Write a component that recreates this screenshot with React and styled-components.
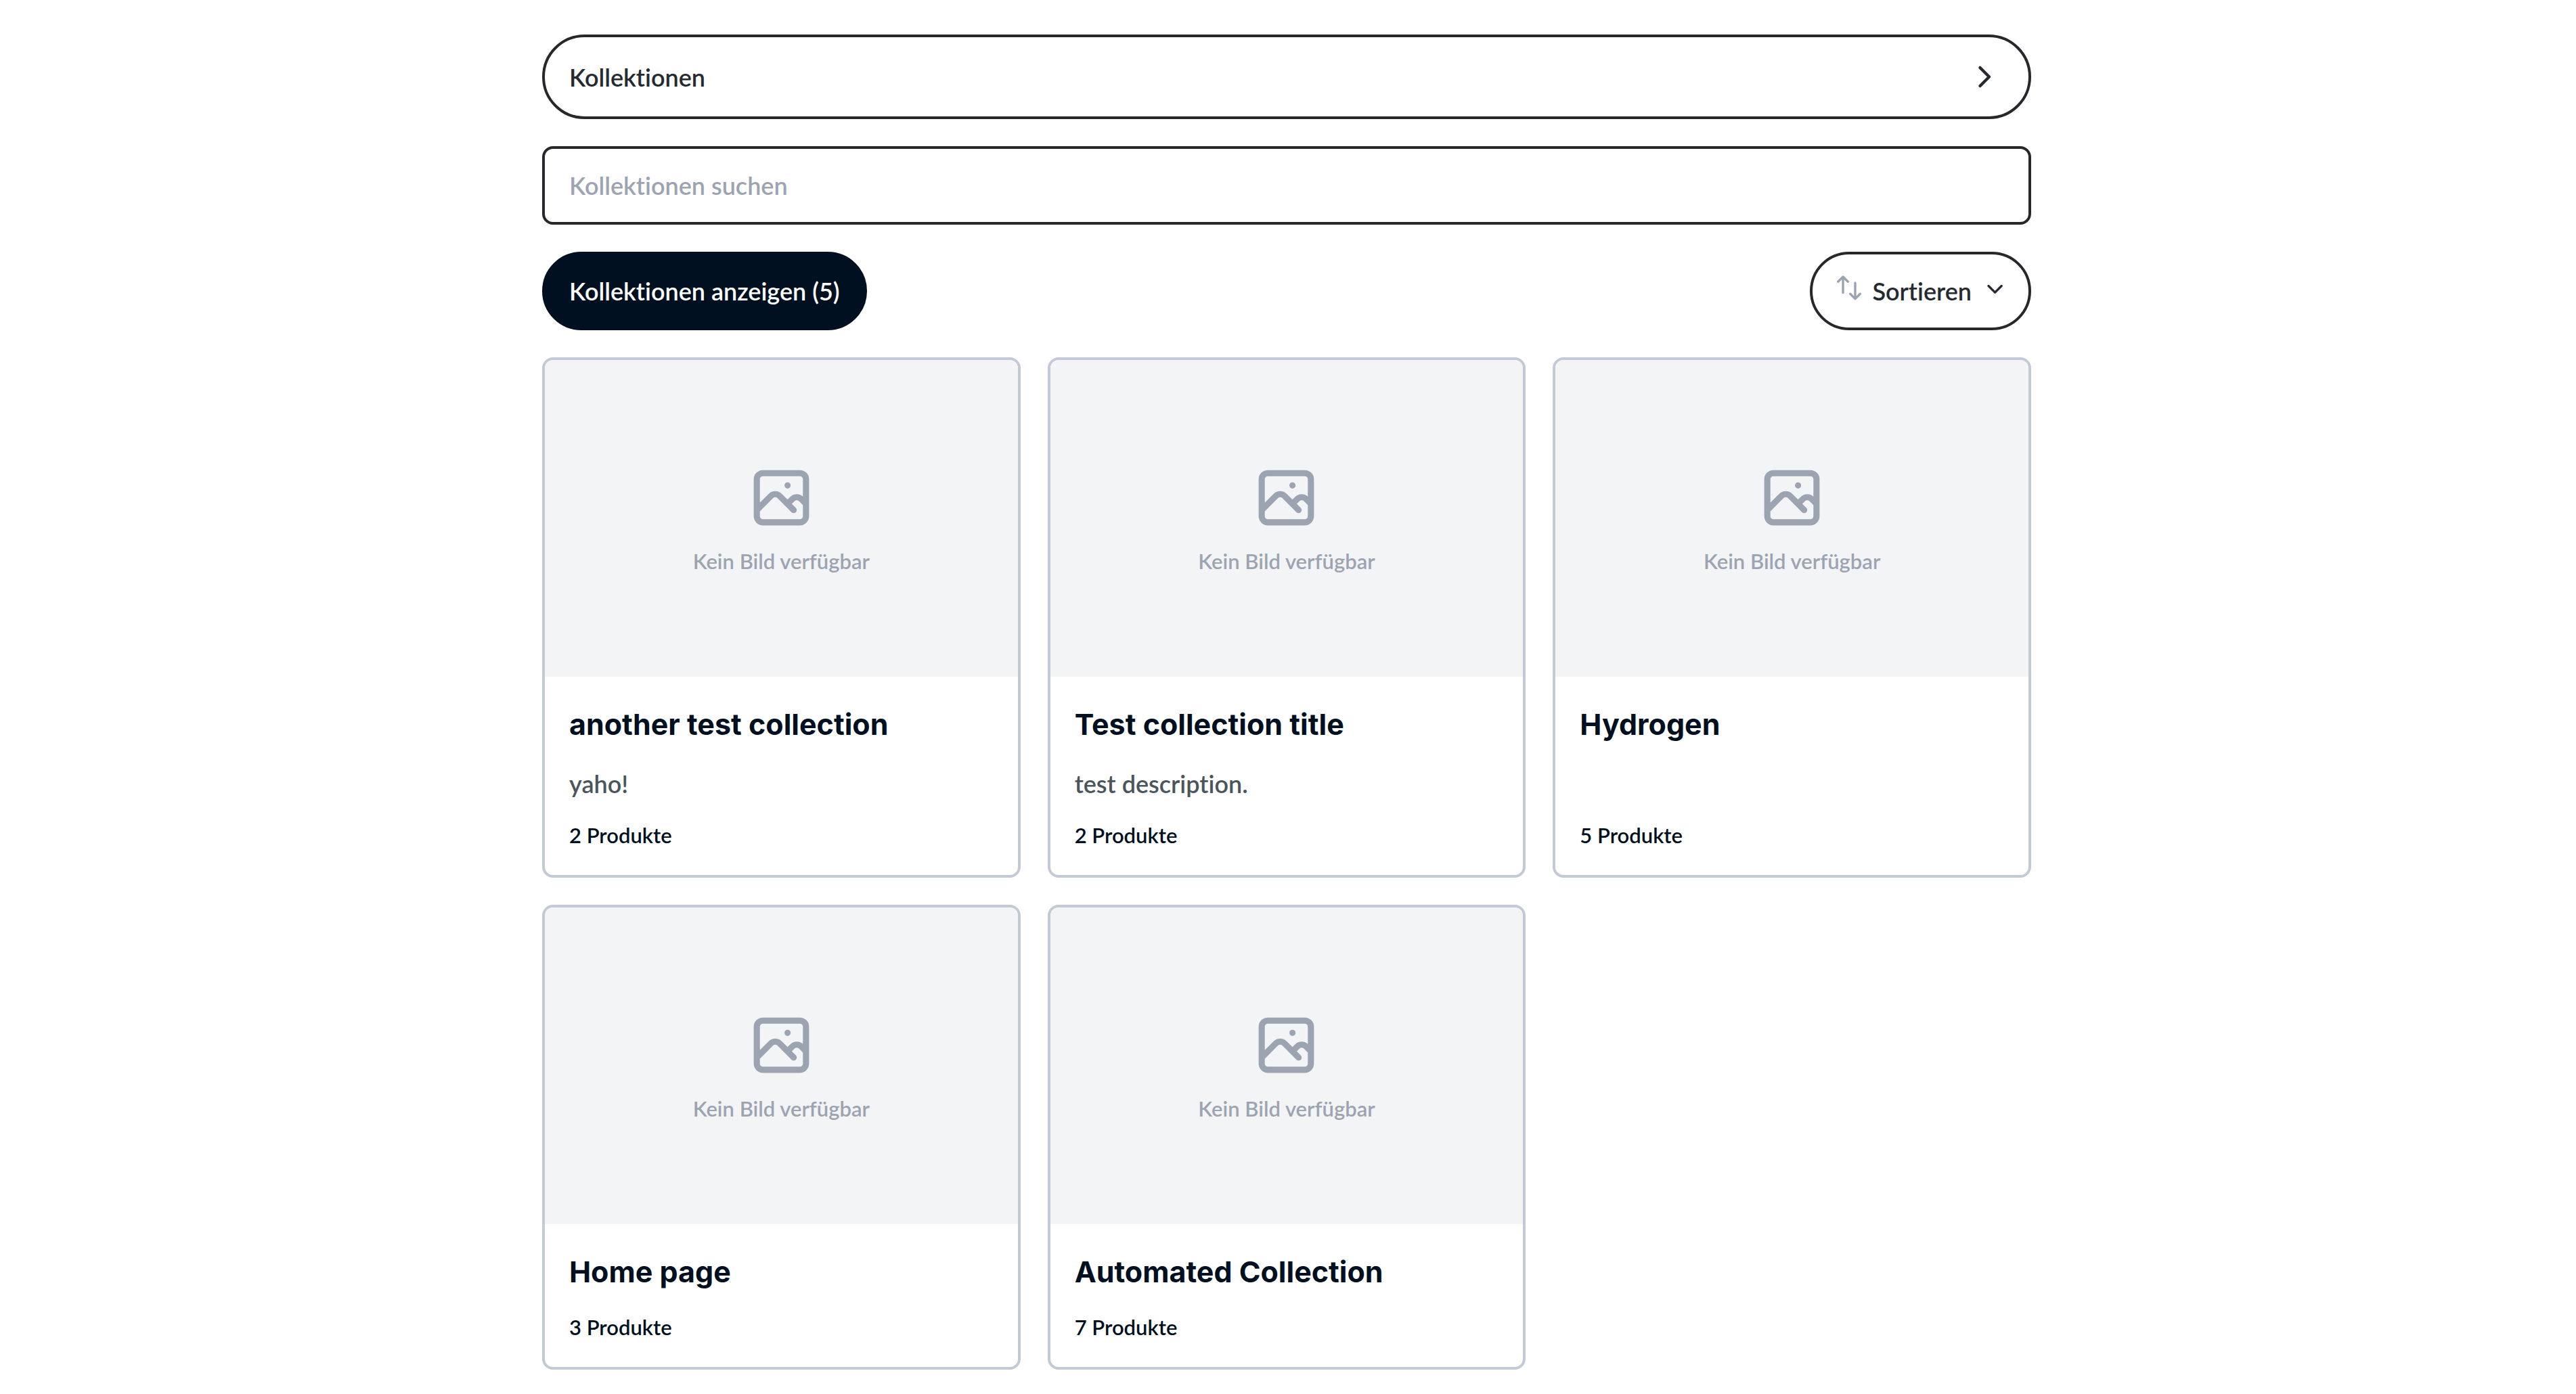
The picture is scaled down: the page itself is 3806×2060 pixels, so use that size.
import React, { useState } from 'react';
import styled, { createGlobalStyle, css } from 'styled-components';

const colors = {
  ink: '#001020',
  text: '#252b30',
  line: '#26282c',
  muted: '#4b555c',
  placeholder: '#9ca4b2',
  cardLine: '#c2cad6',
  imageBg: '#f2f4f6',
};

const GlobalStyle = createGlobalStyle`
  *, *::before, *::after {
    box-sizing: border-box;
  }

  body {
    margin: 0;
    background: #fff;
    color: ${colors.ink};
    font-family: Lato, 'Liberation Sans', sans-serif;
    font-size: 36px;
    font-weight: 600;
    line-height: 52px;
    font-variant-ligatures: none;
  }

  button, input {
    font: inherit;
    font-variant-ligatures: none;
  }
`;

const Page = styled.main`
  display: flex;
  flex-direction: column;
  gap: 40px;
  width: 100%;
  max-width: 2276px;
  margin: 0 auto;
  padding: 51px 40px 36px 36px;
`;

const BreadcrumbLink = styled.a`
  display: flex;
  align-items: center;
  justify-content: space-between;
  padding: 31px 36px;
  border: 4px solid ${colors.line};
  border-radius: 64px;
  color: ${colors.text};
  text-decoration: none;
`;

const SearchInput = styled.input`
  width: 100%;
  height: 116px;
  padding: 28px 36px;
  border: 4px solid ${colors.line};
  border-radius: 16px;
  background: #fff;
  color: ${colors.text};

  &::placeholder {
    color: ${colors.placeholder};
    opacity: 1;
  }
`;

const Toolbar = styled.div`
  display: flex;
  align-items: center;
  justify-content: space-between;
`;

const PillButton = styled.button`
  display: flex;
  align-items: center;
  padding: 28px 36px;
  border: 4px solid ${colors.line};
  border-radius: 58px;
  background: #fff;
  color: ${colors.text};
  cursor: pointer;

  ${(props) =>
    props.$primary &&
    css`
      border-color: ${colors.ink};
      background: ${colors.ink};
      color: #fff;
    `}
`;

const SortLabel = styled.span`
  margin: 0 22px 0 16px;
`;

const CardGrid = styled.div`
  display: grid;
  grid-template-columns: repeat(3, minmax(0, 1fr));
  gap: 40px;
`;

const Card = styled.a`
  display: flex;
  flex-direction: column;
  overflow: hidden;
  border: 4px solid ${colors.cardLine};
  border-radius: 16px;
  color: ${colors.ink};
  text-decoration: none;
`;

const CardImage = styled.div`
  display: flex;
  flex-direction: column;
  align-items: center;
  justify-content: center;
  gap: 16px;
  height: 468px;
  background: ${colors.imageBg};
  color: ${colors.placeholder};
  font-size: 31px;
  line-height: 46px;
`;

const CardBody = styled.div`
  display: flex;
  flex: 1;
  flex-direction: column;
  gap: 24px;
  padding: 36px;
`;

const CardTitle = styled.h2`
  margin: 0;
  font-family: Inter, 'Liberation Sans', sans-serif;
  font-size: 43px;
  font-weight: 700;
  line-height: 69px;
`;

const CardDescription = styled.p`
  margin: 0;
  color: ${colors.muted};
  line-height: 58px;
`;

const CardCount = styled.span`
  margin-top: auto;
  font-size: 31px;
  line-height: 46px;
`;

const StrokeIcon = styled.svg`
  flex: none;
  fill: none;
  stroke: currentColor;
  stroke-linecap: round;
  stroke-linejoin: round;
`;

const SortSvg = styled(StrokeIcon)`
  color: ${colors.placeholder};
`;

const ChevronRightIcon = () => (
  <StrokeIcon width="55" height="55" viewBox="0 0 55 55" strokeWidth="4.5" aria-hidden="true">
    <path d="M19.5 14l13.5 13.5L19.5 41" />
  </StrokeIcon>
);

const ChevronDownIcon = () => (
  <StrokeIcon width="26" height="32" viewBox="0 0 26 32" strokeWidth="3.4" aria-hidden="true">
    <path d="M3 8.5l9.6 9.6 9.6-9.6" />
  </StrokeIcon>
);

const SortIcon = () => (
  <SortSvg width="36" height="46" viewBox="0 0 36 46" strokeWidth="3.4" aria-hidden="true">
    <path d="M1.7 9.3L9 2l7.3 7.3M9 2v23.5" />
    <path d="M19.7 27.3l7.3 7.3 7.3-7.3M27 34.6V11" />
  </SortSvg>
);

const PhotoIcon = () => (
  <StrokeIcon width="109" height="109" viewBox="0 0 24 24" strokeWidth="2" aria-hidden="true">
    <path d="M4 16l4.586-4.586a2 2 0 012.828 0L16 16m-2-2l1.586-1.586a2 2 0 012.828 0L20 14m-6-6h.01M6 20h12a2 2 0 002-2V6a2 2 0 00-2-2H6a2 2 0 00-2 2v12a2 2 0 002 2z" />
  </StrokeIcon>
);

const collections = [
  { title: 'another test collection', description: 'yaho!', count: 2 },
  { title: 'Test collection title', description: 'test description.', count: 2 },
  { title: 'Hydrogen', count: 5 },
  { title: 'Home page', count: 3 },
  { title: 'Automated Collection', count: 7 },
];

const CollectionCard = ({ title, description, count }) => (
  <Card href="#">
    <CardImage>
      <PhotoIcon />
      <span>Kein Bild verfügbar</span>
    </CardImage>
    <CardBody>
      <CardTitle>{title}</CardTitle>
      {description && <CardDescription>{description}</CardDescription>}
      <CardCount>{count} Produkte</CardCount>
    </CardBody>
  </Card>
);

const App = () => {
  const [query, setQuery] = useState('');

  const visible = collections.filter((item) =>
    item.title.toLowerCase().includes(query.toLowerCase())
  );

  return (
    <>
      <GlobalStyle />
      <Page>
        <BreadcrumbLink href="#">
          Kollektionen
          <ChevronRightIcon />
        </BreadcrumbLink>
        <SearchInput
          type="search"
          aria-label="Kollektionen suchen"
          placeholder="Kollektionen suchen"
          value={query}
          onChange={(e) => setQuery(e.target.value)}
        />
        <Toolbar>
          <PillButton type="button" $primary>
            Kollektionen anzeigen ({visible.length})
          </PillButton>
          <PillButton type="button">
            <SortIcon />
            <SortLabel>Sortieren</SortLabel>
            <ChevronDownIcon />
          </PillButton>
        </Toolbar>
        <CardGrid>
          {visible.map((item) => (
            <CollectionCard key={item.title} {...item} />
          ))}
        </CardGrid>
      </Page>
    </>
  );
};

export default App;
